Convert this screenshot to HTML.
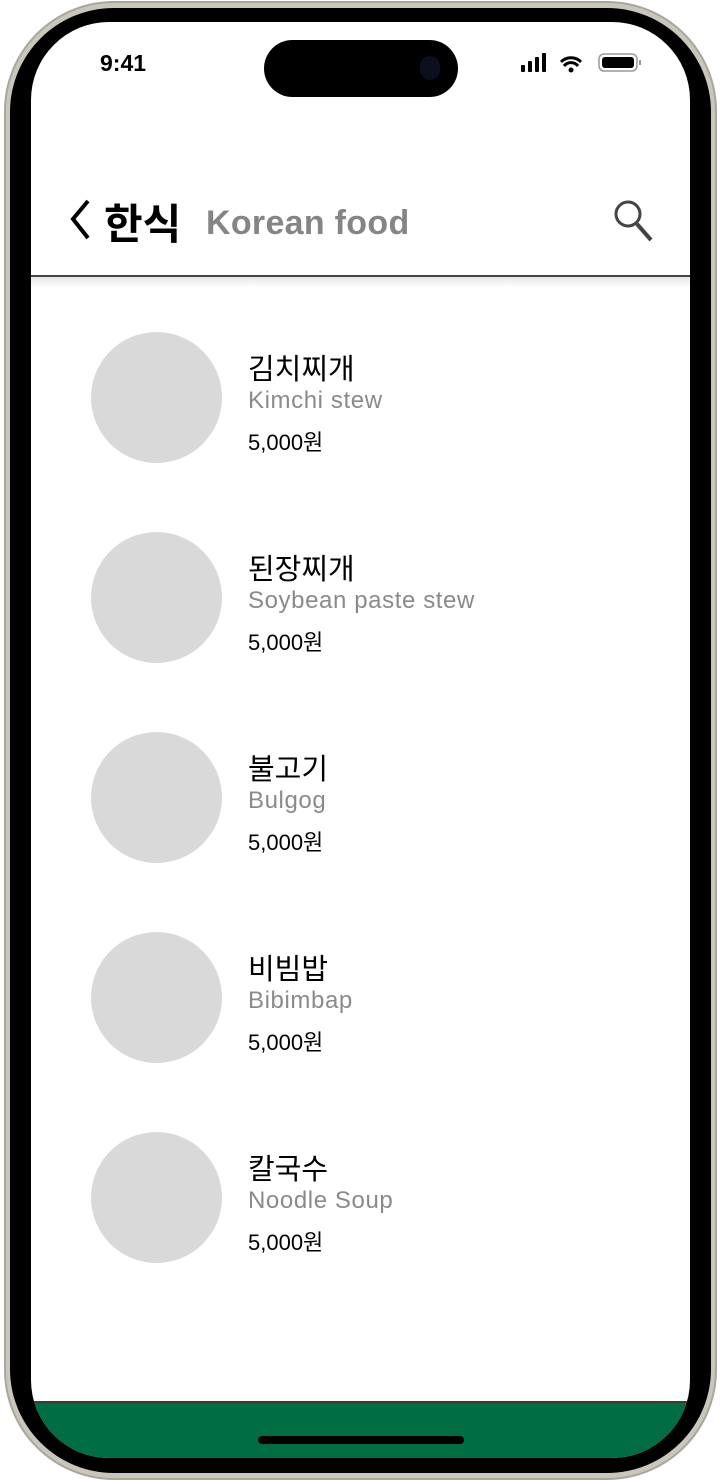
<!DOCTYPE html>
<html><head><meta charset="utf-8"><style>
*{margin:0;padding:0;box-sizing:border-box}
body{width:721px;height:1482px;background:#fff;position:relative;overflow:hidden;font-family:"Liberation Sans","Noto Sans CJK KR",sans-serif}
.frame{position:absolute;left:4px;top:1px;width:713px;height:1479px;border-radius:110px;background:#c9c6bb;border:2px solid #a9a69a}
.bezel{position:absolute;left:10px;top:8px;width:701px;height:1465px;border-radius:104px;background:#000}
.screen{position:absolute;left:31px;top:22px;width:659px;height:1436px;border-radius:78px;background:#fff;overflow:hidden}
.island{position:absolute;left:264px;top:40px;width:194px;height:57px;border-radius:29px;background:#000}
.cam{position:absolute;left:420px;top:56px;width:20px;height:24px;border-radius:10px;background:#0b0f1e}
.time{position:absolute;left:100px;top:50px;font-size:23px;font-weight:bold;color:#000}
.line{position:absolute;left:31px;top:275px;width:659px;height:2px;background:#444}
.shadow{position:absolute;left:31px;top:277px;width:659px;height:10px;background:linear-gradient(#e6e6e6,#fff)}
.item{position:absolute;left:91px;width:500px;height:131px}
.circ{position:absolute;left:0;top:0;width:131px;height:131px;border-radius:50%;background:#d9d9d9}
.t1{position:absolute;left:157px;top:14px;font-size:29px;color:#000;white-space:nowrap}
.t2{position:absolute;left:157px;top:55px;font-size:24px;letter-spacing:0.6px;color:#8a8a8a;white-space:nowrap}
.t3{position:absolute;left:157px;top:93px;font-size:22px;color:#000;white-space:nowrap}
.green{position:absolute;left:0;top:1379px;width:659px;height:60px;background:#006e42;border-top:2px solid #3a3a3a}
.home{position:absolute;left:258px;top:1436px;width:206px;height:8px;border-radius:4px;background:#000}
</style></head><body>
<div class="frame"></div><div class="bezel"></div>
<div class="screen"><div class="green"></div></div>
<div class="island"></div><div class="cam"></div>
<div class="time">9:41</div>
<svg style="position:absolute;left:520px;top:52px" width="125" height="22">
<rect x="1" y="13" width="4" height="7" rx="1"/><rect x="8" y="9" width="4" height="11" rx="1"/><rect x="15" y="5" width="4" height="15" rx="1"/><rect x="22" y="1" width="4" height="19" rx="1"/>
<path d="M41 10a14 14 0 0 1 20 0M44 14a9 9 0 0 1 14 0" stroke="#000" stroke-width="3" fill="none"/><circle cx="51" cy="18" r="2.5"/>
<rect x="79" y="2" width="38" height="17" rx="5" fill="none" stroke="#999" stroke-width="1.5"/><rect x="82" y="5" width="32" height="11" rx="3"/><rect x="119" y="8" width="2" height="5" fill="#999"/>
</svg>
<svg style="position:absolute;left:64px;top:198px" width="30" height="44"><path d="M24 3 L9 21 L24 40" stroke="#000" stroke-width="4" fill="none"/></svg>
<div style="position:absolute;left:104px;top:191px;font-size:42px;font-weight:bold;color:#000">한식</div>
<div style="position:absolute;left:206px;top:204px;font-size:34px;letter-spacing:0.3px;font-weight:bold;color:#858585">Korean food</div>
<svg style="position:absolute;left:612px;top:198px" width="45" height="46"><circle cx="16" cy="16" r="12" stroke="#444" stroke-width="3" fill="none"/><path d="M25 26 L39 42" stroke="#444" stroke-width="4"/></svg>
<div class="line"></div><div class="shadow"></div>
<div class="item" style="top:332px"><div class="circ"></div><div class="t1">김치찌개</div><div class="t2">Kimchi stew</div><div class="t3">5,000원</div></div>
<div class="item" style="top:532px"><div class="circ"></div><div class="t1">된장찌개</div><div class="t2">Soybean paste stew</div><div class="t3">5,000원</div></div>
<div class="item" style="top:732px"><div class="circ"></div><div class="t1">불고기</div><div class="t2">Bulgog</div><div class="t3">5,000원</div></div>
<div class="item" style="top:932px"><div class="circ"></div><div class="t1">비빔밥</div><div class="t2">Bibimbap</div><div class="t3">5,000원</div></div>
<div class="item" style="top:1132px"><div class="circ"></div><div class="t1">칼국수</div><div class="t2">Noodle Soup</div><div class="t3">5,000원</div></div>
<div class="home"></div>
</body></html>
